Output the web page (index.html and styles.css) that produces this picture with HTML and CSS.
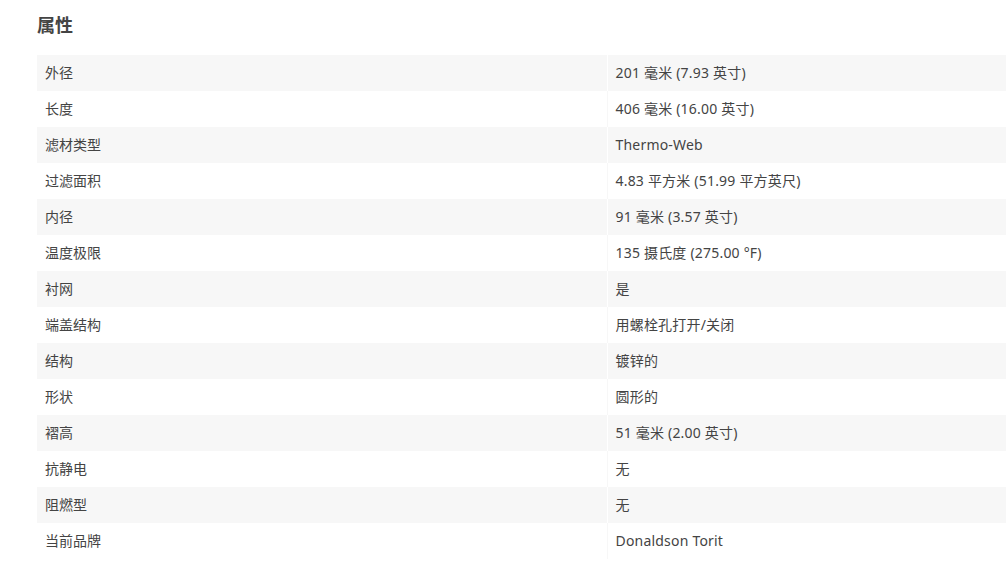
FILE: index.html
```html
<!DOCTYPE html>
<html lang="zh">
<head>
<meta charset="utf-8">
<link rel="stylesheet" href="styles.css">
</head>
<body>
<section class="props">
  <h2 class="props-title">属性</h2>
  <table class="props-table">
    <tbody>
      <tr><td class="k">外径</td><td class="v">201 毫米 (7.93 英寸)</td></tr>
      <tr><td class="k">长度</td><td class="v">406 毫米 (16.00 英寸)</td></tr>
      <tr><td class="k">滤材类型</td><td class="v">Thermo-Web</td></tr>
      <tr><td class="k">过滤面积</td><td class="v">4.83 平方米 (51.99 平方英尺)</td></tr>
      <tr><td class="k">内径</td><td class="v">91 毫米 (3.57 英寸)</td></tr>
      <tr><td class="k">温度极限</td><td class="v">135 摄氏度 (275.00 °F)</td></tr>
      <tr><td class="k">衬网</td><td class="v">是</td></tr>
      <tr><td class="k">端盖结构</td><td class="v">用螺栓孔打开/关闭</td></tr>
      <tr><td class="k">结构</td><td class="v">镀锌的</td></tr>
      <tr><td class="k">形状</td><td class="v">圆形的</td></tr>
      <tr><td class="k">褶高</td><td class="v">51 毫米 (2.00 英寸)</td></tr>
      <tr><td class="k">抗静电</td><td class="v">无</td></tr>
      <tr><td class="k">阻燃型</td><td class="v">无</td></tr>
      <tr><td class="k">当前品牌</td><td class="v">Donaldson Torit</td></tr>
    </tbody>
  </table>
</section>
</body>
</html>
```
FILE: styles.css
```css
html, body {
  margin: 0;
  padding: 0;
  background: #fff;
  overflow: hidden;
}
body {
  font-family: "Noto Sans", "Noto Sans CJK SC", sans-serif;
  color: #444;
}
.props {
  padding: 12px 0 0 37px;
}
.props-title {
  margin: 0 0 17px 0;
  font-size: 18px;
  line-height: 26px;
  font-weight: bold;
  color: #444;
}
.props-table {
  border-collapse: collapse;
  width: 1000px;
  font-size: 14px;
  table-layout: fixed;
}
.props-table td {
  height: 36px;
  padding: 0 8px 2px 8px;
  box-sizing: border-box;
  vertical-align: middle;
  white-space: nowrap;
}
.props-table td.k {
  width: 570px;
}
.props-table td.v {
  border-left: 1px solid #f7f7f7;
  letter-spacing: 0.2px;
}
.props-table tr:nth-child(odd) td {
  background: #f7f7f7;
}
.props-table tr:nth-child(odd) td.v {
  border-left-color: #fff;
}
```
